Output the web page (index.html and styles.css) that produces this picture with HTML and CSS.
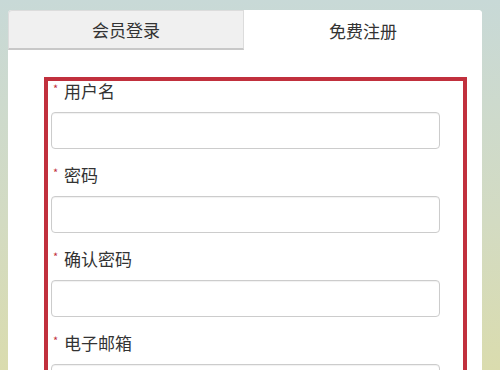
FILE: index.html
```html
<!DOCTYPE html>
<html lang="zh-CN">
<head>
  <meta charset="UTF-8">
  <title>免费注册</title>
  <link rel="stylesheet" href="styles.css">
</head>
<body>

<div class="panel">
  <div class="tabs">
    <div class="tab">会员登录</div>
    <div class="tab active">免费注册</div>
  </div>

  <div class="panel-body">
    <form class="reg-form">
      <div class="field">
        <label><span class="req">*</span>用户名</label>
        <input type="text">
      </div>
      <div class="field">
        <label><span class="req">*</span>密码</label>
        <input type="password">
      </div>
      <div class="field">
        <label><span class="req">*</span>确认密码</label>
        <input type="password">
      </div>
      <div class="field">
        <label><span class="req">*</span>电子邮箱</label>
        <input type="text">
      </div>
    </form>
  </div>
</div>

</body>
</html>
```

FILE: styles.css
```css
html, body {
  height: 100%;
}

body {
  margin: 0;
  padding: 10px 18px 0 8px;
  box-sizing: border-box;
  background: linear-gradient(to bottom, #c8d9d7, #d3dbc2 60%, #dadcae);
  font-family: "Noto Sans CJK SC", "Liberation Sans", sans-serif;
  color: #333;
  overflow: hidden;
}

.panel {
  background: #fff;
  border-radius: 4px 4px 0 0;
}

.tabs {
  display: flex;
  height: 40px;
}

.tab {
  flex: 0 0 236px;
  display: flex;
  align-items: center;
  justify-content: center;
  font-size: 17px;
  color: #333;
  background: #f0f0f0;
  border: 1px solid #dcdcdc;
  border-bottom: 2px solid #c8c8c8;
  border-radius: 4px 0 0 0;
  box-sizing: border-box;
}

.tab.active {
  flex: 1;
  background: #fff;
  border: none;
  border-radius: 0 4px 0 0;
}

.panel-body {
  padding: 27px 15px 0 36px;
}

.reg-form {
  border: 4px solid #c1303d;
  border-bottom: none;
  padding: 0 23px 0 3px;
  height: 300px;
  overflow: hidden;
}

.field {
  margin-bottom: 15px;
}

.field:first-child label {
  margin-top: -1px;
}

.field label {
  display: block;
  line-height: 22px;
  font-size: 17px;
  padding-left: 2px;
}

.req {
  display: inline-block;
  width: 11px;
  color: #c1303d;
  font-size: 11px;
  vertical-align: top;
  line-height: 16px;
}

.field input {
  display: block;
  width: 100%;
  height: 37px;
  margin-top: 10px;
  box-sizing: border-box;
  border: 1px solid #ccc;
  border-radius: 4px;
  box-shadow: inset 0 1px 1px rgba(0, 0, 0, 0.06);
  background: #fff;
  outline: none;
}
```
